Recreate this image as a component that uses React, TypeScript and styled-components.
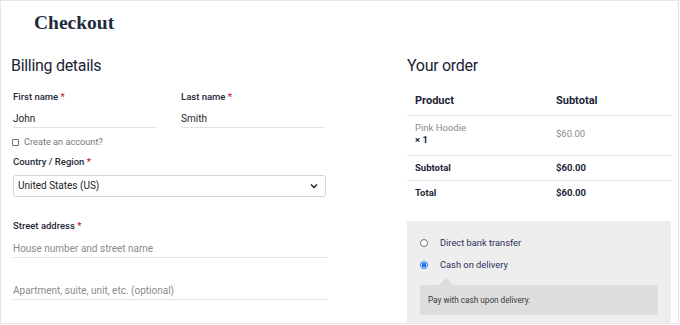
import React, { useState } from 'react';
import styled, { createGlobalStyle } from 'styled-components';

const GlobalStyle = createGlobalStyle`
  body {
    margin: 0;
    background: #ffffff;
    font-family: Roboto, "Liberation Sans", sans-serif;
  }
`;

const ink = '#1f2a3a';

function App() {
  const [payment, setPayment] = useState('cod');

  return (
    <>
      <GlobalStyle />
      <Frame>
        <Header>Checkout</Header>
        <Columns>
          <Billing>
            <SectionTitle>Billing details</SectionTitle>
            <FieldRow>
              <Field>
                <Label>First name <Req>*</Req></Label>
                <TextInput>John</TextInput>
              </Field>
              <Field>
                <Label>Last name <Req>*</Req></Label>
                <TextInput>Smith</TextInput>
              </Field>
            </FieldRow>
            <CheckRow>
              <CheckBox />
              <CheckText>Create an account?</CheckText>
            </CheckRow>
            <Block $top={8}>
              <Label>Country / Region <Req>*</Req></Label>
              <Select>
                <span>United States (US)</span>
                <svg width="8" height="6" viewBox="0 0 8 6">
                  <polyline points="1,1.5 4,4.5 7,1.5" fill="none" stroke="#222" strokeWidth="1.5" />
                </svg>
              </Select>
            </Block>
            <Block $top={23.5}>
              <Label>Street address <Req>*</Req></Label>
              <TextInput $placeholder $gap={10}>House number and street name</TextInput>
            </Block>
            <Block $top={26}>
              <TextInput $placeholder $gap={0}>Apartment, suite, unit, etc. (optional)</TextInput>
            </Block>
          </Billing>

          <Order>
            <SectionTitle>Your order</SectionTitle>
            <OrderTable>
              <colgroup>
                <col style={{ width: 141 }} />
                <col />
              </colgroup>
              <thead>
                <tr>
                  <Th>Product</Th>
                  <Th>Subtotal</Th>
                </tr>
              </thead>
              <tbody>
                <ItemRow>
                  <Td>
                    <Muted>Pink Hoodie</Muted>
                    <Qty>× 1</Qty>
                  </Td>
                  <Td><Muted>$60.00</Muted></Td>
                </ItemRow>
                <TotalRow>
                  <Td>Subtotal</Td>
                  <Td>$60.00</Td>
                </TotalRow>
                <TotalRow $last>
                  <Td>Total</Td>
                  <Td>$60.00</Td>
                </TotalRow>
              </tbody>
            </OrderTable>

            <PaymentBox>
              <MethodRow onClick={() => setPayment('bacs')}>
                <Radio $checked={payment === 'bacs'} />
                <MethodText>Direct bank transfer</MethodText>
              </MethodRow>
              <MethodRow onClick={() => setPayment('cod')}>
                <Radio $checked={payment === 'cod'} />
                <MethodText>Cash on delivery</MethodText>
              </MethodRow>
              <MethodNote>Pay with cash upon delivery.</MethodNote>
            </PaymentBox>
          </Order>
        </Columns>
      </Frame>
    </>
  );
}

const Frame = styled.div`
  width: 677px;
  height: 322px;
  border: 1px solid #e6e6e6;
  overflow: hidden;
  color: ${ink};
`;

const Header = styled.h1`
  margin: 0;
  padding: 9.5px 0 0 33px;
  font-family: "Liberation Serif", serif;
  font-weight: 700;
  font-size: 19.5px;
  line-height: 24px;
  color: #1e2b3d;
`;

const Columns = styled.div`
  display: grid;
  grid-template-columns: 316px 264px;
  column-gap: 80px;
  padding: 21.5px 0 0 10px;
`;

const Billing = styled.div`
  display: flex;
  flex-direction: column;
`;

const Order = styled.div`
  display: flex;
  flex-direction: column;
`;

const SectionTitle = styled.h2`
  margin: 0;
  font-size: 16px;
  line-height: 20px;
  font-weight: 400;
  letter-spacing: -0.3px;
  color: #1c2536;
`;

const FieldRow = styled.div`
  display: grid;
  grid-template-columns: 144px 144px;
  column-gap: 24px;
  padding-left: 2px;
  margin-top: 15px;
`;

const Field = styled.div`
  display: flex;
  flex-direction: column;
`;

const Block = styled.div<{ $top: number }>`
  display: flex;
  flex-direction: column;
  padding-left: 2px;
  margin-top: ${p => p.$top}px;
`;

const Label = styled.div`
  font-size: 9.5px;
  line-height: 12px;
  font-weight: 500;
  color: #1f2937;
`;

const Req = styled.span`
  color: #c0161b;
`;

const TextInput = styled.div<{ $placeholder?: boolean; $gap?: number }>`
  margin-top: ${p => (p.$gap ?? 9)}px;
  height: 15px;
  font-size: 10px;
  line-height: 14px;
  color: ${p => (p.$placeholder ? '#8b8b8b' : '#222222')};
  border-bottom: 1px solid #e2e2e2;
  white-space: nowrap;
`;

const CheckRow = styled.div`
  display: flex;
  align-items: center;
  gap: 5px;
  height: 12px;
  margin-top: 8px;
  padding-left: 1px;
`;

const CheckBox = styled.span`
  width: 5px;
  height: 5px;
  border: 1px solid #6f6f6f;
  border-radius: 1px;
  background: #fff;
`;

const CheckText = styled.span`
  font-size: 9.2px;
  line-height: 12px;
  color: #7a7a7a;
`;

const Select = styled.div`
  margin-top: 6.5px;
  height: 20px;
  border: 1px solid #d6d6d6;
  border-radius: 3px;
  display: flex;
  align-items: center;
  justify-content: space-between;
  padding: 0 7px 0 4px;
  box-sizing: content-box;
  width: 300px;
  font-size: 10px;
  color: #222222;
`;

const OrderTable = styled.table`
  width: 264px;
  border-collapse: collapse;
  table-layout: fixed;
  margin-top: 7.5px;
`;

const Th = styled.th`
  text-align: left;
  font-size: 11px;
  line-height: 14px;
  font-weight: 700;
  padding: 10px 8px 7px;
  border-bottom: 1px solid #e6e6e6;
  color: #1c2536;
`;

const Td = styled.td`
  font-size: 9.5px;
  line-height: 12px;
  padding: 0 8px;
  vertical-align: middle;
`;

const ItemRow = styled.tr`
  height: 39px;
  border-bottom: 1px solid #e6e6e6;
  td {
    padding-top: 6px;
    padding-bottom: 9px;
  }
  td:last-child {
    padding-top: 4px;
    padding-bottom: 6px;
  }
`;

const TotalRow = styled.tr<{ $last?: boolean }>`
  height: 25px;
  border-bottom: ${p => (p.$last ? 'none' : '1px solid #e6e6e6')};
  td {
    font-weight: 700;
    color: #1c2536;
  }
`;

const Muted = styled.div`
  color: #8a8a8a;
`;

const Qty = styled.div`
  font-weight: 700;
  color: #1c2536;
`;

const PaymentBox = styled.div`
  margin-top: 15.5px;
  background: #eeeeef;
  padding: 16px 13px 14px;
  display: flex;
  flex-direction: column;
  gap: 10px;
`;

const MethodRow = styled.div`
  display: flex;
  align-items: center;
  height: 12px;
  gap: 12px;
  cursor: pointer;
`;

const Radio = styled.span<{ $checked: boolean }>`
  width: 8px;
  height: 8px;
  box-sizing: border-box;
  border-radius: 50%;
  border: 1px solid ${p => (p.$checked ? '#1a73e8' : '#767676')};
  background: ${p => (p.$checked ? 'radial-gradient(circle, #1a73e8 0 2.2px, #ffffff 2.6px)' : '#ffffff')};
  flex-shrink: 0;
`;

const MethodText = styled.span`
  font-size: 9.3px;
  color: #2c2f5c;
`;

const MethodNote = styled.div`
  position: relative;
  margin-top: 4.5px;
  background: #dddddd;
  padding: 10px 8px;
  font-size: 8.2px;
  line-height: 10px;
  color: #3b3b3b;

  &::before {
    content: '';
    position: absolute;
    left: 19px;
    top: -7px;
    border-left: 7px solid transparent;
    border-right: 7px solid transparent;
    border-bottom: 7px solid #dddddd;
  }
`;

export default App;
